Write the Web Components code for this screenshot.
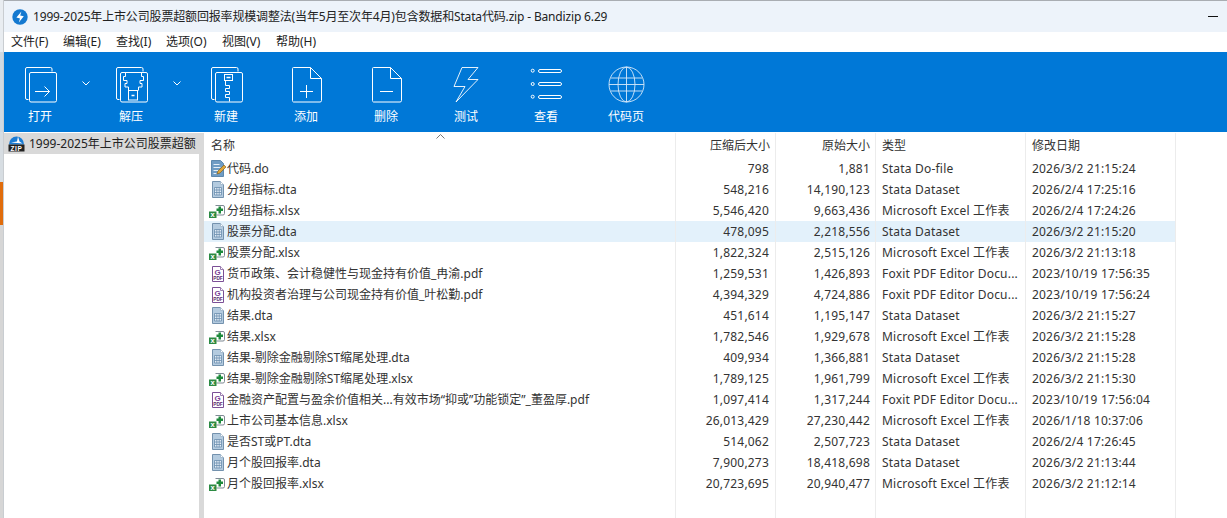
<!DOCTYPE html>
<html lang="zh-CN"><head><meta charset="utf-8"><title>Bandizip</title>
<style>
html,body{margin:0;padding:0;height:100%;overflow:hidden;background:#fff}
body{font:12px/16px "Noto Sans","Noto Sans CJK SC",sans-serif;color:#333}
</style></head><body>
<app-window>
  <title-bar slot="title">1999-2025年上市公司股票超额回报率规模调整法(当年5月至次年4月)包含数据和Stata代码.zip - Bandizip 6.29</title-bar>
  <menu-bar slot="menu"></menu-bar>
  <tool-bar slot="tools"></tool-bar>
  <tree-pane slot="tree">1999-2025年上市公司股票超额</tree-pane>
  <file-list slot="list">
    <file-row icon="do" name="代码.do" packed="798" size="1,881" kind="Stata Do-file" date="2026/3/2 21:15:24"></file-row>
    <file-row icon="dta" name="分组指标.dta" packed="548,216" size="14,190,123" kind="Stata Dataset" date="2026/2/4 17:25:16"></file-row>
    <file-row icon="xlsx" name="分组指标.xlsx" packed="5,546,420" size="9,663,436" kind="Microsoft Excel 工作表" date="2026/2/4 17:24:26"></file-row>
    <file-row selected icon="dta" name="股票分配.dta" packed="478,095" size="2,218,556" kind="Stata Dataset" date="2026/3/2 21:15:20"></file-row>
    <file-row icon="xlsx" name="股票分配.xlsx" packed="1,822,324" size="2,515,126" kind="Microsoft Excel 工作表" date="2026/3/2 21:13:18"></file-row>
    <file-row icon="pdf" name="货币政策、会计稳健性与现金持有价值_冉渝.pdf" packed="1,259,531" size="1,426,893" kind="Foxit PDF Editor Docu..." date="2023/10/19 17:56:35"></file-row>
    <file-row icon="pdf" name="机构投资者治理与公司现金持有价值_叶松勤.pdf" packed="4,394,329" size="4,724,886" kind="Foxit PDF Editor Docu..." date="2023/10/19 17:56:24"></file-row>
    <file-row icon="dta" name="结果.dta" packed="451,614" size="1,195,147" kind="Stata Dataset" date="2026/3/2 21:15:27"></file-row>
    <file-row icon="xlsx" name="结果.xlsx" packed="1,782,546" size="1,929,678" kind="Microsoft Excel 工作表" date="2026/3/2 21:15:28"></file-row>
    <file-row icon="dta" name="结果-剔除金融剔除ST缩尾处理.dta" packed="409,934" size="1,366,881" kind="Stata Dataset" date="2026/3/2 21:15:28"></file-row>
    <file-row icon="xlsx" name="结果-剔除金融剔除ST缩尾处理.xlsx" packed="1,789,125" size="1,961,799" kind="Microsoft Excel 工作表" date="2026/3/2 21:15:30"></file-row>
    <file-row icon="pdf" name="金融资产配置与盈余价值相关...有效市场“抑或”功能锁定”_董盈厚.pdf" packed="1,097,414" size="1,317,244" kind="Foxit PDF Editor Docu..." date="2023/10/19 17:56:04"></file-row>
    <file-row icon="xlsx" name="上市公司基本信息.xlsx" packed="26,013,429" size="27,230,442" kind="Microsoft Excel 工作表" date="2026/1/18 10:37:06"></file-row>
    <file-row icon="dta" name="是否ST或PT.dta" packed="514,062" size="2,507,723" kind="Stata Dataset" date="2026/2/4 17:26:45"></file-row>
    <file-row icon="dta" name="月个股回报率.dta" packed="7,900,273" size="18,418,698" kind="Stata Dataset" date="2026/3/2 21:13:44"></file-row>
    <file-row icon="xlsx" name="月个股回报率.xlsx" packed="20,723,695" size="20,940,477" kind="Microsoft Excel 工作表" date="2026/3/2 21:12:14"></file-row>
  </file-list>
</app-window>
<script>
function def(name, css, html){
  customElements.define(name, class extends HTMLElement{
    constructor(){super();this.attachShadow({mode:'open'})}
    connectedCallback(){
      this.shadowRoot.innerHTML='<style>'+css+'</style>'+(typeof html==='function'?html(this):html);
    }
  });
}
const frames='<path d="M8.500 34.500H7a1.500 1.500 0 0 1-1.500-1.500V4A1.500 1.500 0 0 1 7 2.500H30.500A1.500 1.500 0 0 1 32 4V6.500"/><rect x="9.500" y="7.500" width="27" height="29.500" rx="1.500"/>';
const doc='<path d="M7.500 2.500H24.500L35.500 13.500V35.500a1.500 1.500 0 0 1-1.500 1.500H7.500A1.500 1.500 0 0 1 6.500 35.500V3.500A1 1 0 0 1 7.500 2.500Z"/><path d="M24.500 2.500V13.500H35.500"/>';
const S=(b)=>`<svg width="40" height="40" viewBox="0 0 40 40" fill="none" stroke="#fff" stroke-width="1" style="display:block">${b}</svg>`;
const TOOLS=[
 ['打开',1,S(frames+'<path d="M15 26.500H29.500M24.500 21.500l5 5-5 5"/>')],
 null,
 ['解压',1,S(frames+'<path d="M14.500 7.500v4h-2v4h3.500v3h-2v3.500h3.500v3.500M30.500 7.500v4h2v4h-3.500v3h2v3.500h-3.500v3.500"/><rect x="17.500" y="25.500" width="9" height="9.500"/><path d="M20.500 30.500h3" stroke-width="1.500"/>')],
 null,
 ['新建',0,S(frames+'<rect x="18.500" y="9.500" width="8" height="6"/><path d="M20.500 12.500h4" stroke-width="1.500"/><path d="M19.500 15.500v5h4v3h-4v3h4v3h-4v3h4v4"/>')],
 ['添加',0,S(doc+'<path d="M20.500 20v13M14 26.500h13"/>')],
 ['删除',0,S(doc+'<path d="M14 26.500h13"/>')],
 ['测试',0,S('<path d="M32 2.500H16L8 21.500H19L10 37 32 14.500H22Z" stroke-width=".9"/>')],
 ['查看',0,S('<circle cx="6.700" cy="5.700" r="1.500"/><circle cx="6.700" cy="19" r="1.500"/><circle cx="6.700" cy="31.700" r="1.500"/><rect x="12.500" y="4.500" width="23" height="3" rx="1.500"/><rect x="12.500" y="17.500" width="23" height="3" rx="1.500"/><rect x="12.500" y="30.500" width="23" height="3" rx="1.500"/>')],
 ['代码页',0,S('<g stroke="#d6e9f9" stroke-width=".9"><circle cx="20.500" cy="19.500" r="17.500"/><ellipse cx="20.500" cy="19.500" rx="8.500" ry="17.500"/><path d="M20.500 2v35M5 13h31M5 26h31M3 19.500h35"/></g>')]
];
def('app-window',`
:host{display:flex;height:518px;width:1227px;overflow:hidden}
.edge{width:3px;flex:none;display:flex;flex-direction:column;background:#dfe3e6}
.edge i{display:block}
.a{height:52px;background:#e9edf1}.b{height:80px;background:#cfd9e2}.c{height:50px;background:#d7dde2}.d{height:43px;background:#e06c0c}.e{flex:1;background:#d6d6d6}
.main{flex:1;min-width:0;display:flex;flex-direction:column;border-left:1px solid #c9cdd1}
.body{flex:1;min-height:0;display:flex;padding-top:1px;background:#fff}
::slotted([slot=tree]){width:195px;flex:none}
.split{width:5px;flex:none;background:#d9d9d9}
::slotted([slot=list]){flex:1;min-width:0}
`,`<div class="edge"><i class="a"></i><i class="b"></i><i class="c"></i><i class="d"></i><i class="e"></i></div>
<div class="main"><slot name="title"></slot><slot name="menu"></slot><slot name="tools"></slot>
<div class="body"><slot name="tree"></slot><div class="split"></div><slot name="list"></slot></div></div>`);

def('title-bar',`
:host{display:flex;align-items:center;height:31px;margin-top:1px;background:#edf3fa;color:#222;font-size:12px;padding-left:8px;position:relative}
:host::before{content:"";position:absolute;left:0;right:0;top:-1px;height:1px;background:#a9adb2}
svg{width:16px;height:16px;flex:none;margin-right:5px}
.t{white-space:nowrap;flex:1;letter-spacing:-.16px}
.min{width:10px;height:1px;background:#111;margin-right:9px;flex:none}
`,`<svg viewBox="0 0 16 16"><circle cx="8" cy="8" r="7.700" fill="#1479d0"/><path d="M9.400 2.600 8.200 6.400 11.800 7.200 6.800 13.400 8 9.400 4.400 8.600Z" fill="#fff"/></svg><span class="t"><slot></slot></span><span class="min"></span>`);

def('menu-bar',`
:host{display:flex;height:20px;align-items:center;background:#fff;color:#222;padding-left:7px;font-size:12px;line-height:20px}
span{white-space:nowrap}
`,()=>[['文件(F)',52],['编辑(E)',53],['查找(I)',50],['选项(O)',56],['视图(V)',54],['帮助(H)',60]].map(m=>`<span style="width:${m[1]}px">${m[0]}</span>`).join(''));

def('tool-button',`
:host{display:flex;flex-direction:column;align-items:center;height:80px;color:#fff;font-size:12px;line-height:16px;flex:none;padding-top:13px;box-sizing:border-box;width:80px}
:host([narrow]){width:72px}
.i{width:40px;height:40px;margin-bottom:4px;display:block}
`,(h)=>`<span class="i"><slot></slot></span><span class="l">${h.getAttribute('label')}</span>`);

def('tool-bar',`
:host{display:flex;height:80px;background:#0078d7;align-items:flex-start}
.c{width:19px;flex:none;height:80px;display:flex;justify-content:center;align-items:flex-start;padding-top:29px;box-sizing:border-box}
`,()=>TOOLS.map(t=>t?`<tool-button label="${t[0]}" ${t[1]?'narrow':''}>${t[2]}</tool-button>`:`<span class="c"><svg width="8" height="5" viewBox="0 0 8 5" fill="none" stroke="#fff" stroke-width="1"><path d="M.5.500 4 4 7.500.500"/></svg></span>`).join(''));

def('tree-pane',`
:host{display:block;background:#fff;color:#222;font-size:12px;overflow:hidden}
.r{display:flex;align-items:center;height:21px;background:#d9d9d9;padding-left:4px;white-space:nowrap;overflow:hidden}
svg{width:17px;height:17px;flex:none;margin-right:4px}
`,`<div class="r"><svg viewBox="0 0 17 17"><path d="M1 9.500a7.500 8 0 0 1 15 0Z" fill="#1a7cd4"/><path d="M3 7.500 9 6.500 10 1.500 11.500 6.500 14.500 8.500 9 8Z" fill="#fff"/><rect x="0.500" y="9.500" width="16" height="7" fill="#222"/><text x="8.500" y="15.600" text-anchor="middle" font-family="Liberation Sans" font-weight="700" font-size="6.500" fill="#fff" letter-spacing=".6">ZIP</text></svg><span><slot></slot></span></div>`);

const ICON={
 dta:`<svg viewBox="0 0 16 18" width="16" height="18"><path d="M2.500.5H10.500L13.500 3.500V16.500H2.500Z" fill="#b4cbdf" stroke="#7492ae"/><path d="M10.500 .5V3.500H13.500" fill="#fff" stroke="#a5bbcf"/><path d="M4.500 6.500h7v7.500h-7ZM4.500 9h7M4.500 11.500h7M6.800 6.500v7.500M9.200 6.500v7.500" fill="#e2ecf5" stroke="#6a8eae" stroke-width=".8"/></svg>`,
 do:`<svg viewBox="0 0 16 18" width="16" height="18"><path d="M1.500.5H10.500L13.500 3.500V16.500H1.500Z" fill="#6f9cc4" stroke="#5d88ad"/><path d="M3.500 4.500h6M3.500 7.500h7M3.500 10.500h5M3.500 13.500h3" stroke="#e4eef6" stroke-width="1"/><path d="M7 14 8 11 14 5 16 7 10 13Z" fill="#e0a63a" stroke="#7b5a1c" stroke-width=".6"/></svg>`,
 xlsx:`<svg viewBox="0 0 18 18" width="18" height="18"><path d="M6.500 3.500H14a1.500 1.500 0 0 1 1.500 1.500V11.500a1.500 1.500 0 0 1-1.500 1.500H7.500" fill="#fff" stroke="#7f8a94"/><path d="M7.500 6.500h2V4.500h2.500v2h2v2.500h-2v2.500H9.500V9h-2Z" fill="#1e8a3c"/><rect x="0" y="9.500" width="7.500" height="6.500" fill="#2c8a42"/><text x="3.700" y="15" text-anchor="middle" font-family="Liberation Sans" font-weight="700" font-size="7.500" fill="#fff">x</text></svg>`,
 pdf:`<svg viewBox="0 0 16 18" width="16" height="18"><path d="M2.500 1.500H10.500L13.500 4.500V16.500H2.500Z" fill="#fff" stroke="#7b4f96"/><path d="M10.500 1.500V4.500H13.500" fill="#fff" stroke="#9b7fb0"/><text x="7.500" y="9.700" text-anchor="middle" font-family="Liberation Sans" font-weight="700" font-size="8" fill="#7b3f96">G</text><text x="8" y="15" text-anchor="middle" font-family="Liberation Sans" font-weight="700" font-size="4.800" fill="#5b2c70">PDF</text></svg>`
};
const cols=`
.row{display:flex;width:972px;height:21px;line-height:21px;white-space:nowrap}
.c{box-sizing:border-box;flex:none;border-right:1px solid #ececec;overflow:hidden}
.n{width:472px;padding-left:5px;display:flex;align-items:center}
.p{width:100px;text-align:right;padding-right:6px;letter-spacing:.2px}
.s{width:100px;text-align:right;padding-right:5px;letter-spacing:.2px}
.k{width:150px;padding-left:6px;letter-spacing:.2px}
.d{width:150px;padding-left:6px;letter-spacing:.18px}
`;
def('file-row',`:host{display:block;color:#333}
:host([selected]) .row{background:#e3f1fb}
.ic{width:18px;display:flex;justify-content:center;flex:none}
`+cols,(h)=>{const a=k=>h.getAttribute(k);
 return `<div class="row"><div class="c n"><span class="ic">${ICON[a('icon')]}</span><span class="nm">${a('name')}</span></div><div class="c p">${a('packed')}</div><div class="c s">${a('size')}</div><div class="c k">${a('kind')}</div><div class="c d">${a('date')}</div></div>`});
def('file-list',`:host{display:flex;flex-direction:column;background:#fff;position:relative;color:#333;overflow:hidden}
.fill{flex:1;display:flex;min-height:0}
.fill .c{height:100%}
.sort{position:absolute;left:232px;top:1px}
`+cols+`
.row.head{height:25px;line-height:25px;flex:none}
.head .c{height:25px;letter-spacing:0}
.head .n{padding-left:7px;align-items:flex-start}
.head .p{padding-right:5px}
`,`<div class="row head"><div class="c n">名称</div><div class="c p">压缩后大小</div><div class="c s">原始大小</div><div class="c k">类型</div><div class="c d">修改日期</div></div>
<svg class="sort" width="9" height="5" viewBox="0 0 9 5" fill="none" stroke="#777"><path d="M.5 4.500 4.500.5 8.500 4.500"/></svg>
<slot></slot><div class="fill"><div class="c n"></div><div class="c p"></div><div class="c s"></div><div class="c k"></div><div class="c d"></div></div>`);
</script>
</body></html>
